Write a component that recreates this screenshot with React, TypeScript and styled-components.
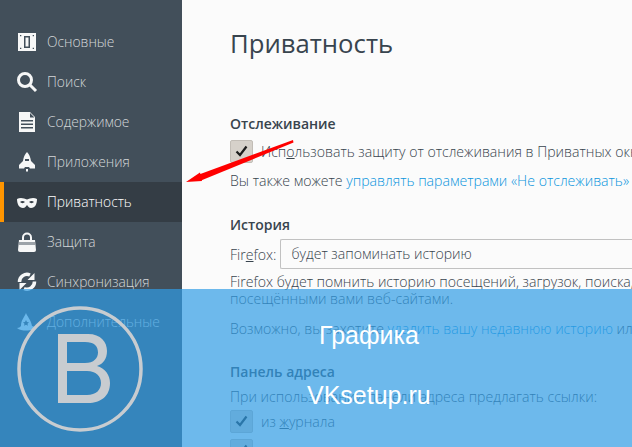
import styled, { createGlobalStyle } from "styled-components";

const GlobalStyle = createGlobalStyle`
  html, body {
    margin: 0;
    padding: 0;
    background: #fbfbfb;
  }
  body {
    font-family: "Open Sans", "Noto Sans", sans-serif;
  }
`;

const Page = styled.div`
  position: relative;
  display: flex;
  width: 632px;
  height: 447px;
  overflow: hidden;
`;

const Sidebar = styled.nav`
  flex: 0 0 182px;
  display: flex;
  flex-direction: column;
  padding-top: 22px;
  box-sizing: border-box;
  background: #424f5a;
`;

const NavItem = styled.div<{ $active?: boolean }>`
  display: flex;
  align-items: center;
  gap: 10px;
  height: 40px;
  padding-bottom: 2px;
  box-sizing: border-box;
  font-size: 13.8px;
  font-weight: 300;
  color: ${(p) => (p.$active ? "#ffffff" : "#d4d7d9")};
  background: ${(p) => (p.$active ? "#343d45" : "transparent")};
  border-left: ${(p) => (p.$active ? "4px solid #ff9500" : "none")};
  padding-left: ${(p) => (p.$active ? "13px" : "17px")};
`;

const NavIcon = styled.svg`
  flex: 0 0 20px;
  width: 20px;
  height: 20px;
  margin-top: 2px;
  fill: #f6f7f7;
  overflow: visible;
`;

const Content = styled.main`
  flex: 1;
  min-width: 0;
  padding: 26px 0 0 48px;
  color: #38444e;
  font-size: 14.1px;
  font-weight: 300;
  white-space: nowrap;
  overflow: hidden;
`;

const Title = styled.h1`
  margin: 0 0 52px;
  height: 36px;
  line-height: 36px;
  font-size: 25.7px;
  font-weight: 400;
`;

const Heading = styled.h2`
  margin: 0 0 1px;
  height: 20px;
  line-height: 20px;
  font-size: 14px;
  font-weight: 600;
`;

const Section = styled.section<{ $gap: number }>`
  margin-bottom: ${(p) => p.$gap}px;
`;

const CheckRow = styled.div`
  display: flex;
  align-items: center;
  gap: 8px;
  height: 24px;
  margin-top: 5px;
`;

const CheckBox = styled.span`
  flex: 0 0 23px;
  display: flex;
  align-items: center;
  justify-content: center;
  width: 23px;
  height: 23px;
  box-sizing: border-box;
  border: 1px solid #c2bdb6;
  border-radius: 2px;
  background: #d6d1ca;
`;

const Line = styled.div`
  height: 17px;
  line-height: 17px;
`;

const Note = styled(Line)`
  margin-top: 9px;
`;

const Suggestion = styled(Line)`
  margin-top: 13px;
`;

const Prompt = styled(Line)`
  height: 16px;
  margin-top: 6px;
`;

const Link = styled.a`
  color: #0a95dd;
`;

const SelectRow = styled.div`
  display: flex;
  align-items: center;
  gap: 4px;
  height: 30px;
  margin: 4px 0 4px;
`;

const SelectBox = styled.div`
  flex: 1;
  height: 30px;
  line-height: 28px;
  padding-left: 10px;
  box-sizing: border-box;
  border: 1px solid #c1c1c1;
  border-right: none;
  border-radius: 2px 0 0 2px;
  background: #fbfbfb;
`;

const Overlay = styled.div`
  position: absolute;
  left: 0;
  right: 0;
  top: 289px;
  bottom: 0;
  background: rgba(48, 157, 230, 0.7);
`;

const Logo = styled.svg`
  position: absolute;
  left: 17px;
  top: 17px;
  width: 126px;
  height: 126px;
`;

const Caption = styled.div<{ $left: number; $top: number }>`
  position: absolute;
  left: ${(p) => p.$left}px;
  top: ${(p) => p.$top}px;
  color: #fff;
  font-family: "Liberation Sans", Arial, sans-serif;
  font-size: 25px;
  line-height: 28px;
  white-space: nowrap;
`;

const Arrow = styled.svg`
  position: absolute;
  left: 180px;
  top: 135px;
  width: 120px;
  height: 56px;
`;

const Underlined = styled.span`
  text-decoration: underline;
`;

const Tick = () => (
  <svg width="13" height="12" viewBox="0 0 13 12">
    <path d="M1.5 6.5 L5 10 L11.5 1.5" fill="none" stroke="#1c1c1c" strokeWidth="2.2" />
  </svg>
);

const items = [
  {
    label: "Основные",
    icon: (
      <path
        fillRule="evenodd"
        d="M1 1h18v18H1zM7 4v12h6V4zM8.500 5.500h3v9h-3zM3 3v1.300h1.300V3zM15.700 3v1.300H17V3zM3 15.700V17h1.300v-1.300zM15.700 15.700V17H17v-1.300z"
      />
    ),
  },
  {
    label: "Поиск",
    icon: (
      <>
        <circle cx="8" cy="8" r="6.500" fill="none" stroke="#f6f7f7" strokeWidth="3" />
        <path d="M12.500 12.500 L19 19" fill="none" stroke="#f6f7f7" strokeWidth="3" />
      </>
    ),
  },
  {
    label: "Содержимое",
    icon: (
      <path
        fillRule="evenodd"
        d="M2 0h11l5 5v15H2zM13 1v4.500h4.500zM4 8v1.500h12V8zM4 11.500V13h12v-1.500zM4 15v1.500h12V15z"
      />
    ),
  },
  {
    label: "Приложения",
    icon: (
      <>
        <path
          fillRule="evenodd"
          d="M10 0C12 2 13.500 5 14 9L18 13V16.500H13L12 15H8L7 16.500H2V13L6 9C6.500 5 8 2 10 0zM8 7v2h4V7z"
        />
        <path d="M9 17h2v2.500H9z" />
      </>
    ),
  },
  {
    label: "Приватность",
    icon: (
      <path
        fillRule="evenodd"
        d="M0 7C3 5 7 6 10 7.500C13 6 17 5 20 7C20 12 18 16 14 16C12 16 11 14 10 13C9 14 8 16 6 16C2 16 0 12 0 7zM3 10C4.500 8.500 6.500 8.500 8 10C6.500 11.500 4.500 11.500 3 10zM12 10C13.500 8.500 15.500 8.500 17 10C15.500 11.500 13.500 11.500 12 10z"
      />
    ),
  },
  {
    label: "Защита",
    icon: (
      <>
        <path d="M6 8V5.500a4 4 0 0 1 8 0V8" fill="none" stroke="#f6f7f7" strokeWidth="2" />
        <path d="M2 8H18L19 18Q19 20 17 20H3Q1 20 1 18z" />
        <path d="M2.500 11.500h15" fill="none" stroke="#424f5a" strokeWidth="3" strokeDasharray="1 1" />
      </>
    ),
  },
  {
    label: "Синхронизация",
    icon: (
      <>
        <path
          d="M2.500 10A7.500 7.500 0 0 1 13 3M17.500 9.500A7.500 7.500 0 0 1 7 16.500"
          fill="none"
          stroke="#f6f7f7"
          strokeWidth="3.500"
        />
        <path d="M17.500 1V8H10.500zM2.500 18V11H9.500z" />
      </>
    ),
  },
  {
    label: "Дополнительные",
    icon: (
      <path
        fillRule="evenodd"
        d="M9 1C10 4 14 8 15 14C17 15 19 15 20 15C17 19 5 20 0 16C2 16 3 15 4 14C4 8 7 6 9 1zM9 8l1 2 2 .3-1.500 1.500.4 2-1.900-1-1.900 1 .4-2-1.500-1.500 2-.3z"
      />
    ),
  },
];

export default function App() {
  return (
    <Page>
      <GlobalStyle />
      <Sidebar>
        {items.map((item) => (
          <NavItem key={item.label} $active={item.label === "Приватность"}>
            <NavIcon viewBox="0 0 20 20">{item.icon}</NavIcon>
            {item.label}
          </NavItem>
        ))}
      </Sidebar>
      <Content>
        <Title>Приватность</Title>
        <Section $gap={26}>
          <Heading>Отслеживание</Heading>
          <CheckRow>
            <CheckBox>
              <Tick />
            </CheckBox>
            <span>
              Исп<Underlined>о</Underlined>льзовать защиту от отслеживания в Приватных окнах
            </span>
          </CheckRow>
          <Note>
            Вы также можете <Link>управлять параметрами «Не отслеживать»</Link>
          </Note>
        </Section>
        <Section $gap={25}>
          <Heading>История</Heading>
          <SelectRow>
            <span>
              Fir<Underlined>e</Underlined>fox:
            </span>
            <SelectBox>будет запоминать историю</SelectBox>
          </SelectRow>
          <Line>Firefox будет помнить историю посещений, загрузок, поиска, а также</Line>
          <Line>посещёнными вами веб-сайтами.</Line>
          <Suggestion>
            Возможно, вы захотите <Link>удалить вашу недавнюю историю</Link> или
          </Suggestion>
        </Section>
        <Section $gap={0}>
          <Heading>Панель адреса</Heading>
          <Prompt>При использовании панели адреса предлагать ссылки:</Prompt>
          <CheckRow>
            <CheckBox>
              <Tick />
            </CheckBox>
            <span>
              из <Underlined>ж</Underlined>урнала
            </span>
          </CheckRow>
          <CheckRow>
            <CheckBox>
              <Tick />
            </CheckBox>
          </CheckRow>
        </Section>
      </Content>
      <Overlay>
        <Logo viewBox="0 0 126 126">
          <circle cx="63" cy="63" r="61" fill="none" stroke="#c8ccd0" strokeWidth="3.500" />
          <path
            fill="#c8ccd0"
            fillRule="evenodd"
            d="M41 28H71C84 28 90 36 90 45C90 53 86 58 80 60C88 62 93 69 93 77C93 90 84 97 71 97H41zM50 36V57H68C77 57 81 52 81 46.500C81 40 77 36 68 36zM50 65V89H70C79 89 84 84 84 77C84 70 79 65 70 65z"
          />
        </Logo>
        <Caption $left={319} $top={32}>Графика</Caption>
        <Caption $left={307} $top={92}>VKsetup.ru</Caption>
      </Overlay>
      <Arrow viewBox="0 0 120 56">
        <path d="M113 5L113.500 7.500L21 45.500L19 39.500z" fill="#f00" />
        <path d="M6 47L20 37.500L22 46z" fill="#f00" />
      </Arrow>
    </Page>
  );
}
